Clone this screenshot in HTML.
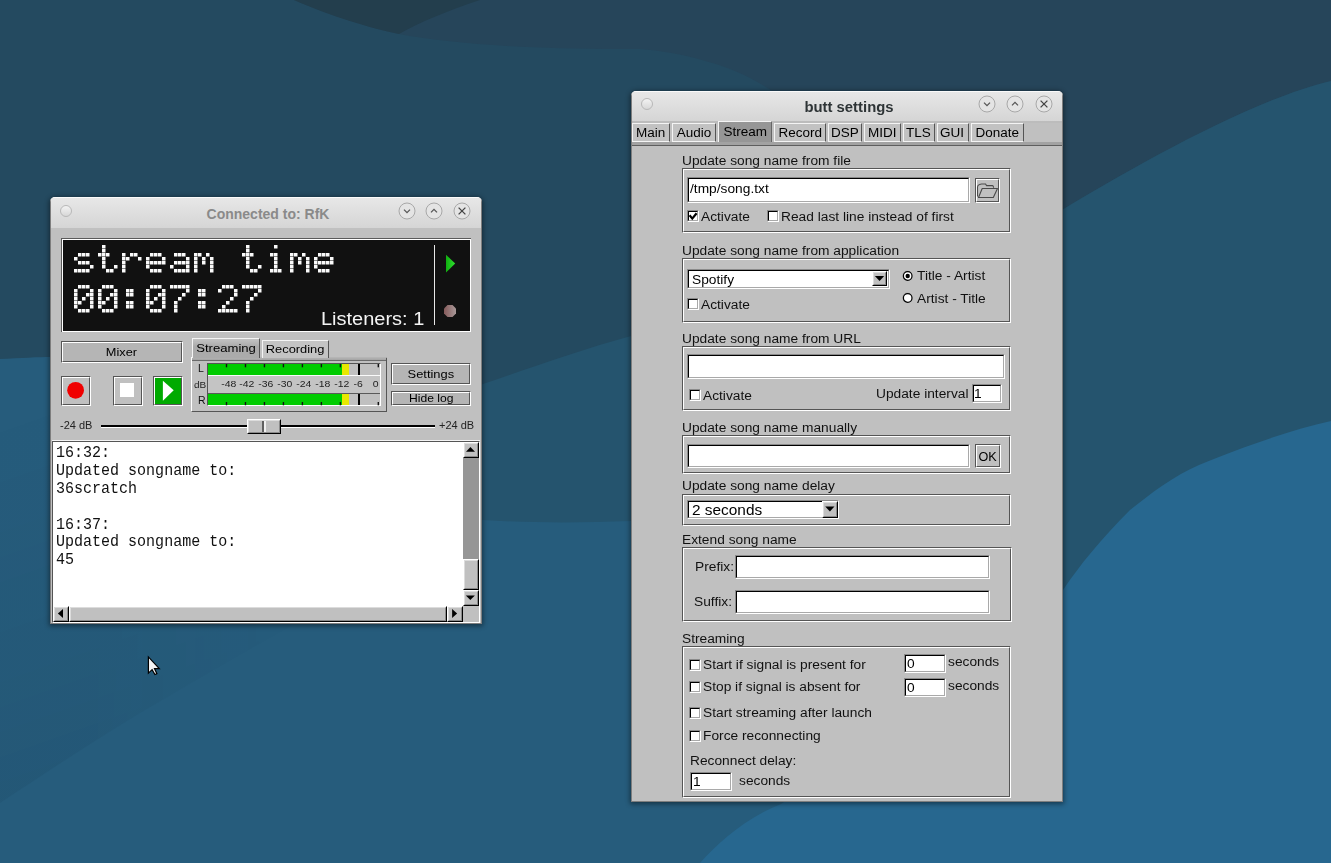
<!DOCTYPE html><html><head><meta charset="utf-8"><style>html,body{margin:0;padding:0;}body{width:1331px;height:863px;overflow:hidden;position:relative;background:#244a60;}</style></head><body>
<svg style="position:absolute;left:0;top:0" width="1331" height="863" viewBox="0 0 1331 863">
<rect width="1331" height="863" fill="#244a60"/>
<path d="M294 0 C330 15 370 28 399 34 C450 44 540 50 640 49 C680 52 730 65 759 83 C860 140 960 250 1062 210 C1130 169 1250 100 1331 81 L1331 0 Z" fill="#26455a"/>
<path d="M294 0 C330 16 370 28 399 34 C420 22 450 10 480 0 Z" fill="#233e4d"/>
<path d="M300 470 C380 420 430 400 483 384 C530 368 580 350 631 336 C760 300 960 247 1062 210 C1130 169 1250 100 1331 81 L1331 863 L300 863 Z" fill="#25546e"/>
<path d="M0 359 C20 358 40 357 50 357 C200 420 350 515 483 520 C530 523 580 523 631 521 C800 560 950 620 1062 640 L1331 700 L1331 863 L0 863 Z" fill="#265c7c"/>
<path d="M700 863 C718 843 745 818 781 804 C880 740 990 650 1063 590 C1080 565 1100 540 1130 510 C1150 494 1175 475 1199 465 C1240 448 1290 430 1331 421 L1331 863 Z" fill="#27678f"/>
<defs><linearGradient id="bgsh" gradientUnits="userSpaceOnUse" x1="0" y1="420" x2="120" y2="760"><stop offset="0" stop-color="#0a1a28" stop-opacity="0"/><stop offset="1" stop-color="#0a1a28" stop-opacity="0.06"/></linearGradient>
<linearGradient id="bgmx" gradientUnits="userSpaceOnUse" x1="0" y1="0" x2="300" y2="0"><stop offset="0" stop-color="#fff"/><stop offset="0.3" stop-color="#fff"/><stop offset="1" stop-color="#000"/></linearGradient>
<mask id="bgm"><rect x="0" y="300" width="400" height="563" fill="url(#bgmx)"/></mask></defs>
<path d="M0 359 L50 357 L360 470 L360 590 C300 620 230 660 159 702 C110 730 50 770 0 803 Z" fill="url(#bgsh)" mask="url(#bgm)"/>
</svg>
<div style="position:absolute;left:50px;top:197px;width:432px;height:427px;background:#c0c0c0;border-radius:5px 5px 0 0;box-shadow:0 1px 5px 1px rgba(0,0,0,0.45);overflow:hidden;"><div style="position:absolute;left:0;top:0;width:432px;height:31px;background:linear-gradient(#e7e7e7,#d5d5d5);border-top:1px solid #fafafa;box-sizing:border-box;"></div><div style="position:absolute;left:0;top:0;width:1px;height:427px;background:#7e7e7e"></div><div style="position:absolute;right:0;top:0;width:1px;height:427px;background:#7e7e7e"></div><div style="position:absolute;left:0;bottom:0;width:432px;height:1px;background:#7e7e7e"></div></div>
<svg style="position:absolute;left:58px;top:202.5px" width="16" height="16"><defs><linearGradient id="tg" x1="0" y1="0" x2="0" y2="1"><stop offset="0" stop-color="#f4f4f4"/><stop offset="1" stop-color="#d6d6d6"/></linearGradient></defs><circle cx="8" cy="8" r="5.5" fill="url(#tg)" stroke="#b8b8b8" stroke-width="1"/></svg>
<div style="position:absolute;left:118.0px;top:207.15px;width:300px;text-align:center;font:14px/14px 'Liberation Sans', sans-serif;font-weight:bold;color:#8a8a8a;white-space:pre;"><span style="display:inline-block;transform:scaleX(1.0);">Connected to: RfK</span></div>
<svg style="position:absolute;left:396.5px;top:201.3px" width="20" height="20"><g transform="translate(10 10)"><circle r="8" fill="#e4e4e4" stroke="#a8a8a8" stroke-width="1"/><path d="M-3 -1.4 L0 1.6 L3 -1.4" stroke="#555" stroke-width="1.3" fill="none"/></g></svg>
<svg style="position:absolute;left:424.4px;top:201.3px" width="20" height="20"><g transform="translate(10 10)"><circle r="8" fill="#e4e4e4" stroke="#a8a8a8" stroke-width="1"/><path d="M-3 1.4 L0 -1.6 L3 1.4" stroke="#555" stroke-width="1.3" fill="none"/></g></svg>
<svg style="position:absolute;left:452.3px;top:201.3px" width="20" height="20"><g transform="translate(10 10)"><circle r="8" fill="#e4e4e4" stroke="#a8a8a8" stroke-width="1"/><path d="M-3.4 -3.4 L3.4 3.4 M3.4 -3.4 L-3.4 3.4" stroke="#444" stroke-width="1.3" fill="none"/></g></svg>
<div style="position:absolute;left:61px;top:238px;width:410px;height:94px;background:#fff;border-top:1px solid #5a5a5a;border-left:1px solid #5a5a5a;box-sizing:border-box;"></div>
<div style="position:absolute;left:63px;top:240px;width:407px;height:91px;background:#111;"></div>
<svg style="position:absolute;left:0;top:0" width="500" height="340"><g fill="#fafafa"><rect x="78" y="253" width="3.5" height="3.5"/><rect x="82" y="253" width="3.5" height="3.5"/><rect x="86" y="253" width="3.5" height="3.5"/><rect x="74" y="257" width="3.5" height="3.5"/><rect x="78" y="261" width="3.5" height="3.5"/><rect x="82" y="261" width="3.5" height="3.5"/><rect x="86" y="261" width="3.5" height="3.5"/><rect x="90" y="265" width="3.5" height="3.5"/><rect x="74" y="269" width="3.5" height="3.5"/><rect x="78" y="269" width="3.5" height="3.5"/><rect x="82" y="269" width="3.5" height="3.5"/><rect x="86" y="269" width="3.5" height="3.5"/><rect x="102" y="245" width="3.5" height="3.5"/><rect x="102" y="249" width="3.5" height="3.5"/><rect x="98" y="253" width="3.5" height="3.5"/><rect x="102" y="253" width="3.5" height="3.5"/><rect x="106" y="253" width="3.5" height="3.5"/><rect x="102" y="257" width="3.5" height="3.5"/><rect x="102" y="261" width="3.5" height="3.5"/><rect x="102" y="265" width="3.5" height="3.5"/><rect x="114" y="265" width="3.5" height="3.5"/><rect x="106" y="269" width="3.5" height="3.5"/><rect x="110" y="269" width="3.5" height="3.5"/><rect x="122" y="253" width="3.5" height="3.5"/><rect x="130" y="253" width="3.5" height="3.5"/><rect x="134" y="253" width="3.5" height="3.5"/><rect x="122" y="257" width="3.5" height="3.5"/><rect x="126" y="257" width="3.5" height="3.5"/><rect x="138" y="257" width="3.5" height="3.5"/><rect x="122" y="261" width="3.5" height="3.5"/><rect x="122" y="265" width="3.5" height="3.5"/><rect x="122" y="269" width="3.5" height="3.5"/><rect x="150" y="253" width="3.5" height="3.5"/><rect x="154" y="253" width="3.5" height="3.5"/><rect x="158" y="253" width="3.5" height="3.5"/><rect x="146" y="257" width="3.5" height="3.5"/><rect x="162" y="257" width="3.5" height="3.5"/><rect x="146" y="261" width="3.5" height="3.5"/><rect x="150" y="261" width="3.5" height="3.5"/><rect x="154" y="261" width="3.5" height="3.5"/><rect x="158" y="261" width="3.5" height="3.5"/><rect x="162" y="261" width="3.5" height="3.5"/><rect x="146" y="265" width="3.5" height="3.5"/><rect x="150" y="269" width="3.5" height="3.5"/><rect x="154" y="269" width="3.5" height="3.5"/><rect x="158" y="269" width="3.5" height="3.5"/><rect x="174" y="253" width="3.5" height="3.5"/><rect x="178" y="253" width="3.5" height="3.5"/><rect x="182" y="253" width="3.5" height="3.5"/><rect x="186" y="257" width="3.5" height="3.5"/><rect x="174" y="261" width="3.5" height="3.5"/><rect x="178" y="261" width="3.5" height="3.5"/><rect x="182" y="261" width="3.5" height="3.5"/><rect x="186" y="261" width="3.5" height="3.5"/><rect x="170" y="265" width="3.5" height="3.5"/><rect x="186" y="265" width="3.5" height="3.5"/><rect x="174" y="269" width="3.5" height="3.5"/><rect x="178" y="269" width="3.5" height="3.5"/><rect x="182" y="269" width="3.5" height="3.5"/><rect x="186" y="269" width="3.5" height="3.5"/><rect x="194" y="253" width="3.5" height="3.5"/><rect x="198" y="253" width="3.5" height="3.5"/><rect x="206" y="253" width="3.5" height="3.5"/><rect x="194" y="257" width="3.5" height="3.5"/><rect x="202" y="257" width="3.5" height="3.5"/><rect x="210" y="257" width="3.5" height="3.5"/><rect x="194" y="261" width="3.5" height="3.5"/><rect x="202" y="261" width="3.5" height="3.5"/><rect x="210" y="261" width="3.5" height="3.5"/><rect x="194" y="265" width="3.5" height="3.5"/><rect x="210" y="265" width="3.5" height="3.5"/><rect x="194" y="269" width="3.5" height="3.5"/><rect x="210" y="269" width="3.5" height="3.5"/><rect x="246" y="245" width="3.5" height="3.5"/><rect x="246" y="249" width="3.5" height="3.5"/><rect x="242" y="253" width="3.5" height="3.5"/><rect x="246" y="253" width="3.5" height="3.5"/><rect x="250" y="253" width="3.5" height="3.5"/><rect x="246" y="257" width="3.5" height="3.5"/><rect x="246" y="261" width="3.5" height="3.5"/><rect x="246" y="265" width="3.5" height="3.5"/><rect x="258" y="265" width="3.5" height="3.5"/><rect x="250" y="269" width="3.5" height="3.5"/><rect x="254" y="269" width="3.5" height="3.5"/><rect x="274" y="245" width="3.5" height="3.5"/><rect x="270" y="253" width="3.5" height="3.5"/><rect x="274" y="253" width="3.5" height="3.5"/><rect x="274" y="257" width="3.5" height="3.5"/><rect x="274" y="261" width="3.5" height="3.5"/><rect x="274" y="265" width="3.5" height="3.5"/><rect x="270" y="269" width="3.5" height="3.5"/><rect x="274" y="269" width="3.5" height="3.5"/><rect x="278" y="269" width="3.5" height="3.5"/><rect x="290" y="253" width="3.5" height="3.5"/><rect x="294" y="253" width="3.5" height="3.5"/><rect x="302" y="253" width="3.5" height="3.5"/><rect x="290" y="257" width="3.5" height="3.5"/><rect x="298" y="257" width="3.5" height="3.5"/><rect x="306" y="257" width="3.5" height="3.5"/><rect x="290" y="261" width="3.5" height="3.5"/><rect x="298" y="261" width="3.5" height="3.5"/><rect x="306" y="261" width="3.5" height="3.5"/><rect x="290" y="265" width="3.5" height="3.5"/><rect x="306" y="265" width="3.5" height="3.5"/><rect x="290" y="269" width="3.5" height="3.5"/><rect x="306" y="269" width="3.5" height="3.5"/><rect x="318" y="253" width="3.5" height="3.5"/><rect x="322" y="253" width="3.5" height="3.5"/><rect x="326" y="253" width="3.5" height="3.5"/><rect x="314" y="257" width="3.5" height="3.5"/><rect x="330" y="257" width="3.5" height="3.5"/><rect x="314" y="261" width="3.5" height="3.5"/><rect x="318" y="261" width="3.5" height="3.5"/><rect x="322" y="261" width="3.5" height="3.5"/><rect x="326" y="261" width="3.5" height="3.5"/><rect x="330" y="261" width="3.5" height="3.5"/><rect x="314" y="265" width="3.5" height="3.5"/><rect x="318" y="269" width="3.5" height="3.5"/><rect x="322" y="269" width="3.5" height="3.5"/><rect x="326" y="269" width="3.5" height="3.5"/><rect x="78" y="285" width="3.5" height="3.5"/><rect x="82" y="285" width="3.5" height="3.5"/><rect x="86" y="285" width="3.5" height="3.5"/><rect x="74" y="289" width="3.5" height="3.5"/><rect x="90" y="289" width="3.5" height="3.5"/><rect x="74" y="293" width="3.5" height="3.5"/><rect x="86" y="293" width="3.5" height="3.5"/><rect x="90" y="293" width="3.5" height="3.5"/><rect x="74" y="297" width="3.5" height="3.5"/><rect x="82" y="297" width="3.5" height="3.5"/><rect x="90" y="297" width="3.5" height="3.5"/><rect x="74" y="301" width="3.5" height="3.5"/><rect x="78" y="301" width="3.5" height="3.5"/><rect x="90" y="301" width="3.5" height="3.5"/><rect x="74" y="305" width="3.5" height="3.5"/><rect x="90" y="305" width="3.5" height="3.5"/><rect x="78" y="309" width="3.5" height="3.5"/><rect x="82" y="309" width="3.5" height="3.5"/><rect x="86" y="309" width="3.5" height="3.5"/><rect x="102" y="285" width="3.5" height="3.5"/><rect x="106" y="285" width="3.5" height="3.5"/><rect x="110" y="285" width="3.5" height="3.5"/><rect x="98" y="289" width="3.5" height="3.5"/><rect x="114" y="289" width="3.5" height="3.5"/><rect x="98" y="293" width="3.5" height="3.5"/><rect x="110" y="293" width="3.5" height="3.5"/><rect x="114" y="293" width="3.5" height="3.5"/><rect x="98" y="297" width="3.5" height="3.5"/><rect x="106" y="297" width="3.5" height="3.5"/><rect x="114" y="297" width="3.5" height="3.5"/><rect x="98" y="301" width="3.5" height="3.5"/><rect x="102" y="301" width="3.5" height="3.5"/><rect x="114" y="301" width="3.5" height="3.5"/><rect x="98" y="305" width="3.5" height="3.5"/><rect x="114" y="305" width="3.5" height="3.5"/><rect x="102" y="309" width="3.5" height="3.5"/><rect x="106" y="309" width="3.5" height="3.5"/><rect x="110" y="309" width="3.5" height="3.5"/><rect x="126" y="289" width="3.5" height="3.5"/><rect x="130" y="289" width="3.5" height="3.5"/><rect x="126" y="293" width="3.5" height="3.5"/><rect x="130" y="293" width="3.5" height="3.5"/><rect x="126" y="301" width="3.5" height="3.5"/><rect x="130" y="301" width="3.5" height="3.5"/><rect x="126" y="305" width="3.5" height="3.5"/><rect x="130" y="305" width="3.5" height="3.5"/><rect x="150" y="285" width="3.5" height="3.5"/><rect x="154" y="285" width="3.5" height="3.5"/><rect x="158" y="285" width="3.5" height="3.5"/><rect x="146" y="289" width="3.5" height="3.5"/><rect x="162" y="289" width="3.5" height="3.5"/><rect x="146" y="293" width="3.5" height="3.5"/><rect x="158" y="293" width="3.5" height="3.5"/><rect x="162" y="293" width="3.5" height="3.5"/><rect x="146" y="297" width="3.5" height="3.5"/><rect x="154" y="297" width="3.5" height="3.5"/><rect x="162" y="297" width="3.5" height="3.5"/><rect x="146" y="301" width="3.5" height="3.5"/><rect x="150" y="301" width="3.5" height="3.5"/><rect x="162" y="301" width="3.5" height="3.5"/><rect x="146" y="305" width="3.5" height="3.5"/><rect x="162" y="305" width="3.5" height="3.5"/><rect x="150" y="309" width="3.5" height="3.5"/><rect x="154" y="309" width="3.5" height="3.5"/><rect x="158" y="309" width="3.5" height="3.5"/><rect x="170" y="285" width="3.5" height="3.5"/><rect x="174" y="285" width="3.5" height="3.5"/><rect x="178" y="285" width="3.5" height="3.5"/><rect x="182" y="285" width="3.5" height="3.5"/><rect x="186" y="285" width="3.5" height="3.5"/><rect x="186" y="289" width="3.5" height="3.5"/><rect x="182" y="293" width="3.5" height="3.5"/><rect x="178" y="297" width="3.5" height="3.5"/><rect x="174" y="301" width="3.5" height="3.5"/><rect x="174" y="305" width="3.5" height="3.5"/><rect x="174" y="309" width="3.5" height="3.5"/><rect x="198" y="289" width="3.5" height="3.5"/><rect x="202" y="289" width="3.5" height="3.5"/><rect x="198" y="293" width="3.5" height="3.5"/><rect x="202" y="293" width="3.5" height="3.5"/><rect x="198" y="301" width="3.5" height="3.5"/><rect x="202" y="301" width="3.5" height="3.5"/><rect x="198" y="305" width="3.5" height="3.5"/><rect x="202" y="305" width="3.5" height="3.5"/><rect x="222" y="285" width="3.5" height="3.5"/><rect x="226" y="285" width="3.5" height="3.5"/><rect x="230" y="285" width="3.5" height="3.5"/><rect x="218" y="289" width="3.5" height="3.5"/><rect x="234" y="289" width="3.5" height="3.5"/><rect x="234" y="293" width="3.5" height="3.5"/><rect x="230" y="297" width="3.5" height="3.5"/><rect x="226" y="301" width="3.5" height="3.5"/><rect x="222" y="305" width="3.5" height="3.5"/><rect x="218" y="309" width="3.5" height="3.5"/><rect x="222" y="309" width="3.5" height="3.5"/><rect x="226" y="309" width="3.5" height="3.5"/><rect x="230" y="309" width="3.5" height="3.5"/><rect x="234" y="309" width="3.5" height="3.5"/><rect x="242" y="285" width="3.5" height="3.5"/><rect x="246" y="285" width="3.5" height="3.5"/><rect x="250" y="285" width="3.5" height="3.5"/><rect x="254" y="285" width="3.5" height="3.5"/><rect x="258" y="285" width="3.5" height="3.5"/><rect x="258" y="289" width="3.5" height="3.5"/><rect x="254" y="293" width="3.5" height="3.5"/><rect x="250" y="297" width="3.5" height="3.5"/><rect x="246" y="301" width="3.5" height="3.5"/><rect x="246" y="305" width="3.5" height="3.5"/><rect x="246" y="309" width="3.5" height="3.5"/></g></svg>
<div style="position:absolute;left:434px;top:245px;width:1px;height:80px;background:#e8e8e8;"></div>
<svg style="position:absolute;left:440px;top:250px" width="20" height="70"><defs><linearGradient id="gt" x1="0" y1="0" x2="1" y2="0"><stop offset="0" stop-color="#10b010"/><stop offset="1" stop-color="#30e030"/></linearGradient><linearGradient id="bo" x1="0" y1="0" x2="1" y2="0"><stop offset="0" stop-color="#855a5a"/><stop offset="1" stop-color="#a89898"/></linearGradient></defs><path d="M6 4.7 L15.2 13.6 L6 22.4 Z" fill="url(#gt)"/><path d="M7.5 55 L12.5 55 L16 58.5 L16 63.5 L12.5 67 L7.5 67 L4 63.5 L4 58.5 Z" fill="url(#bo)"/></svg>
<div style="position:absolute;left:321px;top:309.76px;font:18px/18px 'Liberation Sans', sans-serif;color:#f4f4f4;white-space:pre;transform:scaleX(1.11);transform-origin:0 0;">Listeners: 1</div>
<div style="position:absolute;left:61px;top:341px;width:120px;height:20px;border-top:1px solid #555;border-left:1px solid #555;border-bottom:1px solid #fff;border-right:1px solid #fff;"><div style="position:absolute;left:0;top:0;width:118px;height:18px;border-top:1px solid #fff;border-left:1px solid #fff;border-bottom:1px solid #555;border-right:1px solid #555;background:#b5b5b5"></div></div>
<div style="position:absolute;left:21.799999999999997px;top:346.69px;width:200px;text-align:center;font:11px/11px 'Liberation Sans', sans-serif;color:#000;white-space:pre;"><span style="display:inline-block;transform:scaleX(1.16);">Mixer</span></div>
<div style="position:absolute;left:61px;top:376px;width:28px;height:28px;border-top:1px solid #555;border-left:1px solid #555;border-bottom:1px solid #fff;border-right:1px solid #fff;"><div style="position:absolute;left:0;top:0;width:26px;height:26px;border-top:1px solid #fff;border-left:1px solid #fff;border-bottom:1px solid #555;border-right:1px solid #555;background:#c0c0c0"></div></div>
<svg style="position:absolute;left:60px;top:375px" width="32" height="32"><circle cx="15.6" cy="15.3" r="8.4" fill="#f00000"/></svg>
<div style="position:absolute;left:113px;top:376px;width:28px;height:28px;border-top:1px solid #555;border-left:1px solid #555;border-bottom:1px solid #fff;border-right:1px solid #fff;"><div style="position:absolute;left:0;top:0;width:26px;height:26px;border-top:1px solid #fff;border-left:1px solid #fff;border-bottom:1px solid #555;border-right:1px solid #555;background:#c0c0c0"></div></div>
<div style="position:absolute;left:120px;top:383px;width:14px;height:14px;background:#fff;"></div>
<div style="position:absolute;left:153px;top:376px;width:28px;height:28px;border-top:1px solid #555;border-left:1px solid #555;border-bottom:1px solid #fff;border-right:1px solid #fff;"><div style="position:absolute;left:0;top:0;width:26px;height:26px;border-top:1px solid #fff;border-left:1px solid #fff;border-bottom:1px solid #555;border-right:1px solid #555;background:#00aa00"></div></div>
<svg style="position:absolute;left:150px;top:375px" width="32" height="32"><path d="M12.9 5.8 L23.7 15.3 L12.9 25.8 Z" fill="#fff"/></svg>
<div style="position:absolute;left:191px;top:357px;width:196px;height:55px;background:#c0c0c0;border-left:1px solid #fff;border-top:1px solid #fff;border-right:1px solid #555;border-bottom:1px solid #555;box-sizing:border-box;"></div>
<div style="position:absolute;left:192px;top:357px;width:194px;height:3px;background:linear-gradient(#b8b8b8,#a4a4a4);"></div>
<div style="position:absolute;left:192px;top:360px;width:194px;height:1px;background:#6a6a6a;"></div>
<div style="position:absolute;left:192px;top:338px;width:68px;height:20px;background:linear-gradient(#c4c4c4,#aaaaaa 40%,#ababab);border-left:1px solid #f4f4f4;border-top:1px solid #f4f4f4;border-right:1px solid #555;box-sizing:border-box;"></div>
<div style="position:absolute;left:262px;top:340px;width:67px;height:18px;background:#c4c4c4;border-left:1px solid #f4f4f4;border-top:1px solid #f4f4f4;border-right:1px solid #555;box-sizing:border-box;"></div>
<div style="position:absolute;left:125.9px;top:342.69px;width:200px;text-align:center;font:11px/11px 'Liberation Sans', sans-serif;color:#000;white-space:pre;"><span style="display:inline-block;transform:scaleX(1.19);">Streaming</span></div>
<div style="position:absolute;left:195.3px;top:343.69px;width:200px;text-align:center;font:11px/11px 'Liberation Sans', sans-serif;color:#000;white-space:pre;"><span style="display:inline-block;transform:scaleX(1.17);">Recording</span></div>
<div style="position:absolute;left:207px;top:363px;width:174px;height:43px;background:#c0c0c0;border-top:1px solid #555;border-left:1px solid #555;border-right:1px solid #fff;border-bottom:1px solid #fff;box-sizing:border-box;"></div>
<div style="position:absolute;left:208px;top:364px;width:134px;height:11px;background:#00cc00;"></div>
<div style="position:absolute;left:342px;top:364px;width:7px;height:11px;background:#e8e800;"></div>
<div style="position:absolute;left:208px;top:394px;width:134px;height:11px;background:#00cc00;"></div>
<div style="position:absolute;left:342px;top:394px;width:7px;height:11px;background:#e8e800;"></div>
<div style="position:absolute;left:208px;top:375px;width:172px;height:1px;background:#fafafa;"></div>
<div style="position:absolute;left:208px;top:376px;width:172px;height:17px;background:#c4c4c4;"></div>
<div style="position:absolute;left:208px;top:393px;width:172px;height:1px;background:#5a5a5a;"></div>
<div style="position:absolute;left:358px;top:364px;width:2px;height:11px;background:#000;"></div>
<div style="position:absolute;left:358px;top:394px;width:2px;height:11px;background:#000;"></div>
<svg style="position:absolute;left:200px;top:364px" width="190" height="42"><g fill="#111"><rect x="25.80" y="0" width="1.4" height="3.3"/><rect x="25.80" y="38" width="1.4" height="3.3"/><rect x="44.78" y="0" width="1.4" height="3.3"/><rect x="44.78" y="38" width="1.4" height="3.3"/><rect x="63.75" y="0" width="1.4" height="3.3"/><rect x="63.75" y="38" width="1.4" height="3.3"/><rect x="82.73" y="0" width="1.4" height="3.3"/><rect x="82.73" y="38" width="1.4" height="3.3"/><rect x="101.70" y="0" width="1.4" height="3.3"/><rect x="101.70" y="38" width="1.4" height="3.3"/><rect x="120.68" y="0" width="1.4" height="3.3"/><rect x="120.68" y="38" width="1.4" height="3.3"/><rect x="139.65" y="0" width="1.4" height="3.3"/><rect x="139.65" y="38" width="1.4" height="3.3"/><rect x="177.60" y="0" width="1.4" height="3.3"/><rect x="177.60" y="38" width="1.4" height="3.3"/></g></svg>
<div style="position:absolute;left:208.4px;top:378.76px;width:40px;text-align:center;font:9.5px/9.5px 'Liberation Sans', sans-serif;color:#222;white-space:pre;"><span style="display:inline-block;transform:scaleX(1.1);">-48</span></div>
<div style="position:absolute;left:227.3px;top:378.76px;width:40px;text-align:center;font:9.5px/9.5px 'Liberation Sans', sans-serif;color:#222;white-space:pre;"><span style="display:inline-block;transform:scaleX(1.1);">-42</span></div>
<div style="position:absolute;left:246.3px;top:378.76px;width:40px;text-align:center;font:9.5px/9.5px 'Liberation Sans', sans-serif;color:#222;white-space:pre;"><span style="display:inline-block;transform:scaleX(1.1);">-36</span></div>
<div style="position:absolute;left:265.2px;top:378.76px;width:40px;text-align:center;font:9.5px/9.5px 'Liberation Sans', sans-serif;color:#222;white-space:pre;"><span style="display:inline-block;transform:scaleX(1.1);">-30</span></div>
<div style="position:absolute;left:284.1px;top:378.76px;width:40px;text-align:center;font:9.5px/9.5px 'Liberation Sans', sans-serif;color:#222;white-space:pre;"><span style="display:inline-block;transform:scaleX(1.1);">-24</span></div>
<div style="position:absolute;left:303.0px;top:378.76px;width:40px;text-align:center;font:9.5px/9.5px 'Liberation Sans', sans-serif;color:#222;white-space:pre;"><span style="display:inline-block;transform:scaleX(1.1);">-18</span></div>
<div style="position:absolute;left:322.0px;top:378.76px;width:40px;text-align:center;font:9.5px/9.5px 'Liberation Sans', sans-serif;color:#222;white-space:pre;"><span style="display:inline-block;transform:scaleX(1.1);">-12</span></div>
<div style="position:absolute;left:338.3px;top:378.76px;width:40px;text-align:center;font:9.5px/9.5px 'Liberation Sans', sans-serif;color:#222;white-space:pre;"><span style="display:inline-block;transform:scaleX(1.1);">-6</span></div>
<div style="position:absolute;left:355.7px;top:378.76px;width:40px;text-align:center;font:9.5px/9.5px 'Liberation Sans', sans-serif;color:#222;white-space:pre;"><span style="display:inline-block;transform:scaleX(1.1);">0</span></div>
<div style="position:absolute;left:198px;top:363.54px;font:10px/10px 'Liberation Sans', sans-serif;color:#111;white-space:pre;transform:scaleX(1.05);transform-origin:0 0;">L</div>
<div style="position:absolute;left:194px;top:379.96px;font:9.5px/9.5px 'Liberation Sans', sans-serif;color:#222;white-space:pre;transform:scaleX(1.05);transform-origin:0 0;">dB</div>
<div style="position:absolute;left:198px;top:395.54px;font:10px/10px 'Liberation Sans', sans-serif;color:#111;white-space:pre;transform:scaleX(1.05);transform-origin:0 0;">R</div>
<div style="position:absolute;left:391px;top:363px;width:78px;height:20px;border-top:1px solid #555;border-left:1px solid #555;border-bottom:1px solid #fff;border-right:1px solid #fff;"><div style="position:absolute;left:0;top:0;width:76px;height:18px;border-top:1px solid #fff;border-left:1px solid #fff;border-bottom:1px solid #555;border-right:1px solid #555;background:#b5b5b5"></div></div>
<div style="position:absolute;left:330.4px;top:368.69px;width:200px;text-align:center;font:11px/11px 'Liberation Sans', sans-serif;color:#000;white-space:pre;"><span style="display:inline-block;transform:scaleX(1.17);">Settings</span></div>
<div style="position:absolute;left:391px;top:391px;width:78px;height:13px;border-top:1px solid #555;border-left:1px solid #555;border-bottom:1px solid #fff;border-right:1px solid #fff;"><div style="position:absolute;left:0;top:0;width:76px;height:11px;border-top:1px solid #fff;border-left:1px solid #fff;border-bottom:1px solid #555;border-right:1px solid #555;background:#b5b5b5"></div></div>
<div style="position:absolute;left:330.7px;top:393.29px;width:200px;text-align:center;font:11px/11px 'Liberation Sans', sans-serif;color:#000;white-space:pre;"><span style="display:inline-block;transform:scaleX(1.1);">Hide log</span></div>
<div style="position:absolute;left:60px;top:420.94px;font:10px/10px 'Liberation Sans', sans-serif;color:#222;white-space:pre;transform:scaleX(1.1);transform-origin:0 0;">-24 dB</div>
<div style="position:absolute;left:438.5px;top:421.14px;font:10px/10px 'Liberation Sans', sans-serif;color:#222;white-space:pre;transform:scaleX(1.1);transform-origin:0 0;">+24 dB</div>
<div style="position:absolute;left:101px;top:425px;width:334px;height:2px;background:#000;"></div>
<div style="position:absolute;left:101px;top:427px;width:334px;height:1px;background:#fff;"></div>
<div style="position:absolute;left:247px;top:419px;width:32px;height:13px;border-top:1px solid #fff;border-left:1px solid #fff;border-bottom:1px solid #000;border-right:1px solid #000;"><div style="position:absolute;left:0;top:0;width:30px;height:11px;border-top:1px solid #dcdcdc;border-left:1px solid #dcdcdc;border-bottom:1px solid #8a8a8a;border-right:1px solid #8a8a8a;background:#c0c0c0"></div></div>
<div style="position:absolute;left:262px;top:421px;width:2px;height:11px;background:#606060;"></div>
<div style="position:absolute;left:264px;top:421px;width:2px;height:11px;background:#f0f0f0;"></div>
<div style="position:absolute;left:52px;top:440px;width:428px;height:1px;background:#f4f4f4;"></div>
<div style="position:absolute;left:52px;top:441px;width:428px;height:182px;background:#fff;border-top:1px solid #555;border-left:1px solid #555;border-right:1px solid #fff;border-bottom:1px solid #fff;box-sizing:border-box;"></div>
<div style="position:absolute;left:55.5px;top:445.35px;font:16.5px/16.5px 'Liberation Mono', monospace;color:#111;white-space:pre;transform:scaleX(0.91);transform-origin:0 0;">16:32:</div>
<div style="position:absolute;left:55.5px;top:463.15px;font:16.5px/16.5px 'Liberation Mono', monospace;color:#111;white-space:pre;transform:scaleX(0.91);transform-origin:0 0;">Updated songname to:</div>
<div style="position:absolute;left:55.5px;top:480.95px;font:16.5px/16.5px 'Liberation Mono', monospace;color:#111;white-space:pre;transform:scaleX(0.91);transform-origin:0 0;">36scratch</div>
<div style="position:absolute;left:55.5px;top:516.55px;font:16.5px/16.5px 'Liberation Mono', monospace;color:#111;white-space:pre;transform:scaleX(0.91);transform-origin:0 0;">16:37:</div>
<div style="position:absolute;left:55.5px;top:534.35px;font:16.5px/16.5px 'Liberation Mono', monospace;color:#111;white-space:pre;transform:scaleX(0.91);transform-origin:0 0;">Updated songname to:</div>
<div style="position:absolute;left:55.5px;top:552.15px;font:16.5px/16.5px 'Liberation Mono', monospace;color:#111;white-space:pre;transform:scaleX(0.91);transform-origin:0 0;">45</div>
<div style="position:absolute;left:463px;top:442px;width:16px;height:164px;background:#969696;"></div>
<div style="position:absolute;left:463px;top:442px;width:14px;height:14px;border-top:1px solid #fff;border-left:1px solid #fff;border-bottom:1px solid #000;border-right:1px solid #000;"><div style="position:absolute;left:0;top:0;width:12px;height:12px;border-top:1px solid #dcdcdc;border-left:1px solid #dcdcdc;border-bottom:1px solid #8a8a8a;border-right:1px solid #8a8a8a;background:#c0c0c0"></div></div>
<svg style="position:absolute;left:463px;top:442px" width="16" height="16"><path d="M3 9.8 L12 9.8 L7.4 4.9 Z" fill="#000"/></svg>
<div style="position:absolute;left:463px;top:559px;width:14px;height:29px;border-top:1px solid #fff;border-left:1px solid #fff;border-bottom:1px solid #000;border-right:1px solid #000;"><div style="position:absolute;left:0;top:0;width:12px;height:27px;border-top:1px solid #dcdcdc;border-left:1px solid #dcdcdc;border-bottom:1px solid #8a8a8a;border-right:1px solid #8a8a8a;background:#c0c0c0"></div></div>
<div style="position:absolute;left:463px;top:590px;width:14px;height:14px;border-top:1px solid #fff;border-left:1px solid #fff;border-bottom:1px solid #000;border-right:1px solid #000;"><div style="position:absolute;left:0;top:0;width:12px;height:12px;border-top:1px solid #dcdcdc;border-left:1px solid #dcdcdc;border-bottom:1px solid #8a8a8a;border-right:1px solid #8a8a8a;background:#c0c0c0"></div></div>
<svg style="position:absolute;left:463px;top:590px" width="16" height="16"><path d="M2.8 5.4 L11.9 5.4 L7.3 9.9 Z" fill="#000"/></svg>
<div style="position:absolute;left:53px;top:606px;width:426px;height:16px;background:#c0c0c0;"></div>
<div style="position:absolute;left:53px;top:606px;width:14px;height:14px;border-top:1px solid #fff;border-left:1px solid #fff;border-bottom:1px solid #000;border-right:1px solid #000;"><div style="position:absolute;left:0;top:0;width:12px;height:12px;border-top:1px solid #dcdcdc;border-left:1px solid #dcdcdc;border-bottom:1px solid #8a8a8a;border-right:1px solid #8a8a8a;background:#c0c0c0"></div></div>
<svg style="position:absolute;left:53px;top:606px" width="16" height="16"><path d="M4.9 7.4 L10 2.9 L10 11.9 Z" fill="#000"/></svg>
<div style="position:absolute;left:69px;top:606px;width:376px;height:14px;border-top:1px solid #fff;border-left:1px solid #fff;border-bottom:1px solid #000;border-right:1px solid #000;"><div style="position:absolute;left:0;top:0;width:374px;height:12px;border-top:1px solid #dcdcdc;border-left:1px solid #dcdcdc;border-bottom:1px solid #8a8a8a;border-right:1px solid #8a8a8a;background:#c0c0c0"></div></div>
<div style="position:absolute;left:447px;top:606px;width:14px;height:14px;border-top:1px solid #fff;border-left:1px solid #fff;border-bottom:1px solid #000;border-right:1px solid #000;"><div style="position:absolute;left:0;top:0;width:12px;height:12px;border-top:1px solid #dcdcdc;border-left:1px solid #dcdcdc;border-bottom:1px solid #8a8a8a;border-right:1px solid #8a8a8a;background:#c0c0c0"></div></div>
<svg style="position:absolute;left:447px;top:606px" width="16" height="16"><path d="M5.1 2.9 L5.1 12 L10.1 7.5 Z" fill="#000"/></svg>
<div style="position:absolute;left:631px;top:91px;width:432px;height:711px;background:#c0c0c0;border-radius:5px 5px 0 0;box-shadow:0 1px 5px 1px rgba(0,0,0,0.45);overflow:hidden;"><div style="position:absolute;left:0;top:0;width:432px;height:30px;background:linear-gradient(#e7e7e7,#d5d5d5);border-top:1px solid #fafafa;box-sizing:border-box;"></div><div style="position:absolute;left:0;top:0;width:1px;height:711px;background:#7e7e7e"></div><div style="position:absolute;right:0;top:0;width:1px;height:711px;background:#7e7e7e"></div><div style="position:absolute;left:0;bottom:0;width:432px;height:1px;background:#7e7e7e"></div></div>
<svg style="position:absolute;left:639px;top:95.7px" width="16" height="16"><defs><linearGradient id="tg" x1="0" y1="0" x2="0" y2="1"><stop offset="0" stop-color="#f4f4f4"/><stop offset="1" stop-color="#d6d6d6"/></linearGradient></defs><circle cx="8" cy="8" r="5.5" fill="url(#tg)" stroke="#b8b8b8" stroke-width="1"/></svg>
<div style="position:absolute;left:699.3px;top:99.95px;width:300px;text-align:center;font:14px/14px 'Liberation Sans', sans-serif;font-weight:bold;color:#2e3436;white-space:pre;"><span style="display:inline-block;transform:scaleX(1.06);">butt settings</span></div>
<svg style="position:absolute;left:977px;top:94px" width="20" height="20"><g transform="translate(10 10)"><circle r="8" fill="#e4e4e4" stroke="#a8a8a8" stroke-width="1"/><path d="M-3 -1.4 L0 1.6 L3 -1.4" stroke="#555" stroke-width="1.3" fill="none"/></g></svg>
<svg style="position:absolute;left:1005px;top:94px" width="20" height="20"><g transform="translate(10 10)"><circle r="8" fill="#e4e4e4" stroke="#a8a8a8" stroke-width="1"/><path d="M-3 1.4 L0 -1.6 L3 1.4" stroke="#555" stroke-width="1.3" fill="none"/></g></svg>
<svg style="position:absolute;left:1033.8px;top:94px" width="20" height="20"><g transform="translate(10 10)"><circle r="8" fill="#e4e4e4" stroke="#a8a8a8" stroke-width="1"/><path d="M-3.4 -3.4 L3.4 3.4 M3.4 -3.4 L-3.4 3.4" stroke="#444" stroke-width="1.3" fill="none"/></g></svg>
<div style="position:absolute;left:632px;top:121px;width:430px;height:2px;background:#bcbcbc;"></div>
<div style="position:absolute;left:632px;top:142px;width:430px;height:3px;background:#a2a2a2;"></div>
<div style="position:absolute;left:632px;top:145px;width:430px;height:1px;background:#5e5e5e;"></div>
<div style="position:absolute;left:632px;top:123px;width:38px;height:19px;background:#c2c2c2;border-left:1px solid #f4f4f4;border-top:1px solid #f4f4f4;border-bottom:1px solid #f4f4f4;border-right:1px solid #555;box-sizing:border-box;"></div>
<div style="position:absolute;left:610.6px;top:126.92px;width:80px;text-align:center;font:12.5px/12.5px 'Liberation Sans', sans-serif;color:#000;white-space:pre;"><span style="display:inline-block;transform:scaleX(1.08);">Main</span></div>
<div style="position:absolute;left:672px;top:123px;width:44px;height:19px;background:#c2c2c2;border-left:1px solid #f4f4f4;border-top:1px solid #f4f4f4;border-bottom:1px solid #f4f4f4;border-right:1px solid #555;box-sizing:border-box;"></div>
<div style="position:absolute;left:654.0px;top:126.92px;width:80px;text-align:center;font:12.5px/12.5px 'Liberation Sans', sans-serif;color:#000;white-space:pre;"><span style="display:inline-block;transform:scaleX(1.08);">Audio</span></div>
<div style="position:absolute;left:718px;top:121px;width:54px;height:21px;background:#969696;border-left:1px solid #f4f4f4;border-top:1px solid #f4f4f4;border-right:1px solid #666;box-sizing:border-box;"></div>
<div style="position:absolute;left:704.9px;top:125.92px;width:80px;text-align:center;font:12.5px/12.5px 'Liberation Sans', sans-serif;color:#000;white-space:pre;"><span style="display:inline-block;transform:scaleX(1.08);">Stream</span></div>
<div style="position:absolute;left:774px;top:123px;width:52px;height:19px;background:#c2c2c2;border-left:1px solid #f4f4f4;border-top:1px solid #f4f4f4;border-bottom:1px solid #f4f4f4;border-right:1px solid #555;box-sizing:border-box;"></div>
<div style="position:absolute;left:759.7px;top:126.92px;width:80px;text-align:center;font:12.5px/12.5px 'Liberation Sans', sans-serif;color:#000;white-space:pre;"><span style="display:inline-block;transform:scaleX(1.08);">Record</span></div>
<div style="position:absolute;left:828px;top:123px;width:34px;height:19px;background:#c2c2c2;border-left:1px solid #f4f4f4;border-top:1px solid #f4f4f4;border-bottom:1px solid #f4f4f4;border-right:1px solid #555;box-sizing:border-box;"></div>
<div style="position:absolute;left:805.0px;top:126.92px;width:80px;text-align:center;font:12.5px/12.5px 'Liberation Sans', sans-serif;color:#000;white-space:pre;"><span style="display:inline-block;transform:scaleX(1.08);">DSP</span></div>
<div style="position:absolute;left:864px;top:123px;width:37px;height:19px;background:#c2c2c2;border-left:1px solid #f4f4f4;border-top:1px solid #f4f4f4;border-bottom:1px solid #f4f4f4;border-right:1px solid #555;box-sizing:border-box;"></div>
<div style="position:absolute;left:842.2px;top:126.92px;width:80px;text-align:center;font:12.5px/12.5px 'Liberation Sans', sans-serif;color:#000;white-space:pre;"><span style="display:inline-block;transform:scaleX(1.08);">MIDI</span></div>
<div style="position:absolute;left:903px;top:123px;width:32px;height:19px;background:#c2c2c2;border-left:1px solid #f4f4f4;border-top:1px solid #f4f4f4;border-bottom:1px solid #f4f4f4;border-right:1px solid #555;box-sizing:border-box;"></div>
<div style="position:absolute;left:878.5px;top:126.92px;width:80px;text-align:center;font:12.5px/12.5px 'Liberation Sans', sans-serif;color:#000;white-space:pre;"><span style="display:inline-block;transform:scaleX(1.08);">TLS</span></div>
<div style="position:absolute;left:937px;top:123px;width:32px;height:19px;background:#c2c2c2;border-left:1px solid #f4f4f4;border-top:1px solid #f4f4f4;border-bottom:1px solid #f4f4f4;border-right:1px solid #555;box-sizing:border-box;"></div>
<div style="position:absolute;left:912.2px;top:126.92px;width:80px;text-align:center;font:12.5px/12.5px 'Liberation Sans', sans-serif;color:#000;white-space:pre;"><span style="display:inline-block;transform:scaleX(1.08);">GUI</span></div>
<div style="position:absolute;left:971px;top:123px;width:53px;height:19px;background:#c2c2c2;border-left:1px solid #f4f4f4;border-top:1px solid #f4f4f4;border-bottom:1px solid #f4f4f4;border-right:1px solid #555;box-sizing:border-box;"></div>
<div style="position:absolute;left:957.6px;top:126.92px;width:80px;text-align:center;font:12.5px/12.5px 'Liberation Sans', sans-serif;color:#000;white-space:pre;"><span style="display:inline-block;transform:scaleX(1.08);">Donate</span></div>
<div style="position:absolute;left:682.1px;top:155.12px;font:12.5px/12.5px 'Liberation Sans', sans-serif;color:#111;white-space:pre;transform:scaleX(1.1);transform-origin:0 0;">Update song name from file</div>
<div style="position:absolute;left:682px;top:168px;width:327px;height:63px;border-top:1px solid #555;border-left:1px solid #555;border-bottom:1px solid #fff;border-right:1px solid #fff;"><div style="position:absolute;left:0;top:0;width:325px;height:61px;border-top:1px solid #fff;border-left:1px solid #fff;border-bottom:1px solid #555;border-right:1px solid #555;background:transparent"></div></div>
<div style="position:absolute;left:687px;top:177px;width:281px;height:24px;border-top:1px solid #8a8a8a;border-left:1px solid #8a8a8a;border-bottom:1px solid #fff;border-right:1px solid #fff;"><div style="position:absolute;left:0;top:0;width:279px;height:22px;border-top:1px solid #000;border-left:1px solid #000;border-bottom:1px solid #a9a9a9;border-right:1px solid #a9a9a9;background:#fff"></div></div>
<div style="position:absolute;left:690.2px;top:183.02px;font:12.5px/12.5px 'Liberation Sans', sans-serif;color:#000;white-space:pre;transform:scaleX(1.1);transform-origin:0 0;">/tmp/song.txt</div>
<div style="position:absolute;left:975px;top:178px;width:23px;height:23px;border-top:1px solid #555;border-left:1px solid #555;border-bottom:1px solid #fff;border-right:1px solid #fff;"><div style="position:absolute;left:0;top:0;width:21px;height:21px;border-top:1px solid #fff;border-left:1px solid #fff;border-bottom:1px solid #555;border-right:1px solid #555;background:#c0c0c0"></div></div>
<svg style="position:absolute;left:975px;top:178px" width="25" height="25"><path d="M2.5 18.5 L2.5 9 Q2.5 7.2 4.5 6.5 Q6 5.8 7 6 L10.5 6 L11.6 7.6 L17.5 7.6 Q18.5 7.7 18.6 9.8" fill="none" stroke="#4a4a4a" stroke-width="1.1"/><path d="M7.2 10.5 L22.5 10.5 L18.3 19.5 L3.5 19.5 Z" fill="none" stroke="#4a4a4a" stroke-width="1.1" stroke-linejoin="round"/></svg>
<div style="position:absolute;left:687px;top:210px;width:10px;height:10px;border-top:1px solid #8a8a8a;border-left:1px solid #8a8a8a;border-bottom:1px solid #fff;border-right:1px solid #fff;"><div style="position:absolute;left:0;top:0;width:8px;height:8px;border-top:1px solid #000;border-left:1px solid #000;border-bottom:1px solid #a9a9a9;border-right:1px solid #a9a9a9;background:#fff"></div></div>
<svg style="position:absolute;left:687px;top:210px" width="12" height="12"><path d="M2.6 5.2 L5.3 8.6 L9.6 3.2" stroke="#000" stroke-width="2.2" fill="none"/></svg>
<div style="position:absolute;left:701.1px;top:211.22px;font:12.5px/12.5px 'Liberation Sans', sans-serif;color:#111;white-space:pre;transform:scaleX(1.1);transform-origin:0 0;">Activate</div>
<div style="position:absolute;left:767px;top:210px;width:10px;height:10px;border-top:1px solid #8a8a8a;border-left:1px solid #8a8a8a;border-bottom:1px solid #fff;border-right:1px solid #fff;"><div style="position:absolute;left:0;top:0;width:8px;height:8px;border-top:1px solid #000;border-left:1px solid #000;border-bottom:1px solid #a9a9a9;border-right:1px solid #a9a9a9;background:#fff"></div></div>
<div style="position:absolute;left:781.3px;top:211.22px;font:12.5px/12.5px 'Liberation Sans', sans-serif;color:#111;white-space:pre;transform:scaleX(1.1);transform-origin:0 0;">Read last line instead of first</div>
<div style="position:absolute;left:682.1px;top:244.92px;font:12.5px/12.5px 'Liberation Sans', sans-serif;color:#111;white-space:pre;transform:scaleX(1.1);transform-origin:0 0;">Update song name from application</div>
<div style="position:absolute;left:682px;top:258px;width:327px;height:63px;border-top:1px solid #555;border-left:1px solid #555;border-bottom:1px solid #fff;border-right:1px solid #fff;"><div style="position:absolute;left:0;top:0;width:325px;height:61px;border-top:1px solid #fff;border-left:1px solid #fff;border-bottom:1px solid #555;border-right:1px solid #555;background:transparent"></div></div>
<div style="position:absolute;left:687px;top:269px;width:201px;height:18px;border-top:1px solid #8a8a8a;border-left:1px solid #8a8a8a;border-bottom:1px solid #fff;border-right:1px solid #fff;"><div style="position:absolute;left:0;top:0;width:199px;height:16px;border-top:1px solid #000;border-left:1px solid #000;border-bottom:1px solid #a9a9a9;border-right:1px solid #a9a9a9;background:#fff"></div></div>
<div style="position:absolute;left:692px;top:273.62px;font:12.5px/12.5px 'Liberation Sans', sans-serif;color:#000;white-space:pre;transform:scaleX(1.1);transform-origin:0 0;">Spotify</div>
<div style="position:absolute;left:872px;top:271px;width:13px;height:13px;border-top:1px solid #fff;border-left:1px solid #fff;border-bottom:1px solid #000;border-right:1px solid #000;"><div style="position:absolute;left:0;top:0;width:11px;height:11px;border-top:1px solid #dcdcdc;border-left:1px solid #dcdcdc;border-bottom:1px solid #8a8a8a;border-right:1px solid #8a8a8a;background:#c0c0c0"></div></div>
<svg style="position:absolute;left:872px;top:271px" width="15" height="15"><path d="M2.9 5 L12.2 5 L7.6 9.9 Z" fill="#000"/></svg>
<div style="position:absolute;left:687px;top:298px;width:10px;height:10px;border-top:1px solid #8a8a8a;border-left:1px solid #8a8a8a;border-bottom:1px solid #fff;border-right:1px solid #fff;"><div style="position:absolute;left:0;top:0;width:8px;height:8px;border-top:1px solid #000;border-left:1px solid #000;border-bottom:1px solid #a9a9a9;border-right:1px solid #a9a9a9;background:#fff"></div></div>
<div style="position:absolute;left:701.1px;top:299.32px;font:12.5px/12.5px 'Liberation Sans', sans-serif;color:#111;white-space:pre;transform:scaleX(1.1);transform-origin:0 0;">Activate</div>
<svg style="position:absolute;left:900px;top:267.9px" width="16" height="16"><circle cx="7.2" cy="7.6" r="5" fill="#8a8a8a" opacity="0.35"/><circle cx="7.7" cy="8" r="4.3" fill="#fff" stroke="#000" stroke-width="1.2"/><circle cx="7.7" cy="8" r="2.2" fill="#000"/></svg>
<svg style="position:absolute;left:900px;top:289.6px" width="16" height="16"><circle cx="7.2" cy="7.6" r="5" fill="#8a8a8a" opacity="0.35"/><circle cx="7.7" cy="8" r="4.3" fill="#fff" stroke="#000" stroke-width="1.2"/></svg>
<div style="position:absolute;left:916.7px;top:270.42px;font:12.5px/12.5px 'Liberation Sans', sans-serif;color:#111;white-space:pre;transform:scaleX(1.1);transform-origin:0 0;">Title - Artist</div>
<div style="position:absolute;left:916.7px;top:293.02px;font:12.5px/12.5px 'Liberation Sans', sans-serif;color:#111;white-space:pre;transform:scaleX(1.1);transform-origin:0 0;">Artist - Title</div>
<div style="position:absolute;left:682.1px;top:332.92px;font:12.5px/12.5px 'Liberation Sans', sans-serif;color:#111;white-space:pre;transform:scaleX(1.1);transform-origin:0 0;">Update song name from URL</div>
<div style="position:absolute;left:682px;top:346px;width:327px;height:63px;border-top:1px solid #555;border-left:1px solid #555;border-bottom:1px solid #fff;border-right:1px solid #fff;"><div style="position:absolute;left:0;top:0;width:325px;height:61px;border-top:1px solid #fff;border-left:1px solid #fff;border-bottom:1px solid #555;border-right:1px solid #555;background:transparent"></div></div>
<div style="position:absolute;left:687px;top:354px;width:316px;height:23px;border-top:1px solid #8a8a8a;border-left:1px solid #8a8a8a;border-bottom:1px solid #fff;border-right:1px solid #fff;"><div style="position:absolute;left:0;top:0;width:314px;height:21px;border-top:1px solid #000;border-left:1px solid #000;border-bottom:1px solid #a9a9a9;border-right:1px solid #a9a9a9;background:#fff"></div></div>
<div style="position:absolute;left:689px;top:389px;width:10px;height:10px;border-top:1px solid #8a8a8a;border-left:1px solid #8a8a8a;border-bottom:1px solid #fff;border-right:1px solid #fff;"><div style="position:absolute;left:0;top:0;width:8px;height:8px;border-top:1px solid #000;border-left:1px solid #000;border-bottom:1px solid #a9a9a9;border-right:1px solid #a9a9a9;background:#fff"></div></div>
<div style="position:absolute;left:702.9px;top:389.92px;font:12.5px/12.5px 'Liberation Sans', sans-serif;color:#111;white-space:pre;transform:scaleX(1.1);transform-origin:0 0;">Activate</div>
<div style="position:absolute;left:875.9px;top:388.12px;font:12.5px/12.5px 'Liberation Sans', sans-serif;color:#111;white-space:pre;transform:scaleX(1.1);transform-origin:0 0;">Update interval</div>
<div style="position:absolute;left:972px;top:384px;width:28px;height:17px;border-top:1px solid #8a8a8a;border-left:1px solid #8a8a8a;border-bottom:1px solid #fff;border-right:1px solid #fff;"><div style="position:absolute;left:0;top:0;width:26px;height:15px;border-top:1px solid #000;border-left:1px solid #000;border-bottom:1px solid #a9a9a9;border-right:1px solid #a9a9a9;background:#fff"></div></div>
<div style="position:absolute;left:974px;top:388.22px;font:12.5px/12.5px 'Liberation Sans', sans-serif;color:#000;white-space:pre;transform:scaleX(1.1);transform-origin:0 0;">1</div>
<div style="position:absolute;left:682.1px;top:421.72px;font:12.5px/12.5px 'Liberation Sans', sans-serif;color:#111;white-space:pre;transform:scaleX(1.1);transform-origin:0 0;">Update song name manually</div>
<div style="position:absolute;left:682px;top:435px;width:327px;height:37px;border-top:1px solid #555;border-left:1px solid #555;border-bottom:1px solid #fff;border-right:1px solid #fff;"><div style="position:absolute;left:0;top:0;width:325px;height:35px;border-top:1px solid #fff;border-left:1px solid #fff;border-bottom:1px solid #555;border-right:1px solid #555;background:transparent"></div></div>
<div style="position:absolute;left:687px;top:444px;width:281px;height:22px;border-top:1px solid #8a8a8a;border-left:1px solid #8a8a8a;border-bottom:1px solid #fff;border-right:1px solid #fff;"><div style="position:absolute;left:0;top:0;width:279px;height:20px;border-top:1px solid #000;border-left:1px solid #000;border-bottom:1px solid #a9a9a9;border-right:1px solid #a9a9a9;background:#fff"></div></div>
<div style="position:absolute;left:975px;top:444px;width:24px;height:22px;border-top:1px solid #555;border-left:1px solid #555;border-bottom:1px solid #fff;border-right:1px solid #fff;"><div style="position:absolute;left:0;top:0;width:22px;height:20px;border-top:1px solid #fff;border-left:1px solid #fff;border-bottom:1px solid #555;border-right:1px solid #555;background:#c0c0c0"></div></div>
<div style="position:absolute;left:968.0px;top:451.04px;width:40px;text-align:center;font:12px/12px 'Liberation Sans', sans-serif;color:#000;white-space:pre;"><span style="display:inline-block;transform:scaleX(1.05);">OK</span></div>
<div style="position:absolute;left:682.1px;top:480.42px;font:12.5px/12.5px 'Liberation Sans', sans-serif;color:#111;white-space:pre;transform:scaleX(1.1);transform-origin:0 0;">Update song name delay</div>
<div style="position:absolute;left:682px;top:494px;width:327px;height:30px;border-top:1px solid #555;border-left:1px solid #555;border-bottom:1px solid #fff;border-right:1px solid #fff;"><div style="position:absolute;left:0;top:0;width:325px;height:28px;border-top:1px solid #fff;border-left:1px solid #fff;border-bottom:1px solid #555;border-right:1px solid #555;background:transparent"></div></div>
<div style="position:absolute;left:687px;top:500px;width:150px;height:17px;border-top:1px solid #8a8a8a;border-left:1px solid #8a8a8a;border-bottom:1px solid #fff;border-right:1px solid #fff;"><div style="position:absolute;left:0;top:0;width:148px;height:15px;border-top:1px solid #000;border-left:1px solid #000;border-bottom:1px solid #a9a9a9;border-right:1px solid #a9a9a9;background:#fff"></div></div>
<div style="position:absolute;left:691.5px;top:502.55px;font:14px/14px 'Liberation Sans', sans-serif;color:#000;white-space:pre;transform:scaleX(1.1);transform-origin:0 0;">2 seconds</div>
<div style="position:absolute;left:822px;top:501px;width:14px;height:15px;border-top:1px solid #fff;border-left:1px solid #fff;border-bottom:1px solid #000;border-right:1px solid #000;"><div style="position:absolute;left:0;top:0;width:12px;height:13px;border-top:1px solid #dcdcdc;border-left:1px solid #dcdcdc;border-bottom:1px solid #8a8a8a;border-right:1px solid #8a8a8a;background:#c0c0c0"></div></div>
<svg style="position:absolute;left:822px;top:501px" width="16" height="17"><path d="M3.2 5.5 L12.5 5.5 L7.9 10.4 Z" fill="#000"/></svg>
<div style="position:absolute;left:682.1px;top:534.12px;font:12.5px/12.5px 'Liberation Sans', sans-serif;color:#111;white-space:pre;transform:scaleX(1.1);transform-origin:0 0;">Extend song name</div>
<div style="position:absolute;left:682px;top:547px;width:328px;height:73px;border-top:1px solid #555;border-left:1px solid #555;border-bottom:1px solid #fff;border-right:1px solid #fff;"><div style="position:absolute;left:0;top:0;width:326px;height:71px;border-top:1px solid #fff;border-left:1px solid #fff;border-bottom:1px solid #555;border-right:1px solid #555;background:transparent"></div></div>
<div style="position:absolute;left:735px;top:555px;width:253px;height:22px;border-top:1px solid #8a8a8a;border-left:1px solid #8a8a8a;border-bottom:1px solid #fff;border-right:1px solid #fff;"><div style="position:absolute;left:0;top:0;width:251px;height:20px;border-top:1px solid #000;border-left:1px solid #000;border-bottom:1px solid #a9a9a9;border-right:1px solid #a9a9a9;background:#fff"></div></div>
<div style="position:absolute;left:695.0px;top:561.22px;font:12.5px/12.5px 'Liberation Sans', sans-serif;color:#111;white-space:pre;transform:scaleX(1.1);transform-origin:0 0;">Prefix:</div>
<div style="position:absolute;left:735px;top:590px;width:253px;height:22px;border-top:1px solid #8a8a8a;border-left:1px solid #8a8a8a;border-bottom:1px solid #fff;border-right:1px solid #fff;"><div style="position:absolute;left:0;top:0;width:251px;height:20px;border-top:1px solid #000;border-left:1px solid #000;border-bottom:1px solid #a9a9a9;border-right:1px solid #a9a9a9;background:#fff"></div></div>
<div style="position:absolute;left:694.0px;top:595.92px;font:12.5px/12.5px 'Liberation Sans', sans-serif;color:#111;white-space:pre;transform:scaleX(1.1);transform-origin:0 0;">Suffix:</div>
<div style="position:absolute;left:682.1px;top:633.42px;font:12.5px/12.5px 'Liberation Sans', sans-serif;color:#111;white-space:pre;transform:scaleX(1.1);transform-origin:0 0;">Streaming</div>
<div style="position:absolute;left:682px;top:646px;width:327px;height:150px;border-top:1px solid #555;border-left:1px solid #555;border-bottom:1px solid #fff;border-right:1px solid #fff;"><div style="position:absolute;left:0;top:0;width:325px;height:148px;border-top:1px solid #fff;border-left:1px solid #fff;border-bottom:1px solid #555;border-right:1px solid #555;background:transparent"></div></div>
<div style="position:absolute;left:689px;top:659px;width:10px;height:10px;border-top:1px solid #8a8a8a;border-left:1px solid #8a8a8a;border-bottom:1px solid #fff;border-right:1px solid #fff;"><div style="position:absolute;left:0;top:0;width:8px;height:8px;border-top:1px solid #000;border-left:1px solid #000;border-bottom:1px solid #a9a9a9;border-right:1px solid #a9a9a9;background:#fff"></div></div>
<div style="position:absolute;left:703.2px;top:659.02px;font:12.5px/12.5px 'Liberation Sans', sans-serif;color:#111;white-space:pre;transform:scaleX(1.1);transform-origin:0 0;">Start if signal is present for</div>
<div style="position:absolute;left:904px;top:654px;width:40px;height:17px;border-top:1px solid #8a8a8a;border-left:1px solid #8a8a8a;border-bottom:1px solid #fff;border-right:1px solid #fff;"><div style="position:absolute;left:0;top:0;width:38px;height:15px;border-top:1px solid #000;border-left:1px solid #000;border-bottom:1px solid #a9a9a9;border-right:1px solid #a9a9a9;background:#fff"></div></div>
<div style="position:absolute;left:906.5px;top:658.42px;font:12.5px/12.5px 'Liberation Sans', sans-serif;color:#000;white-space:pre;transform:scaleX(1.1);transform-origin:0 0;">0</div>
<div style="position:absolute;left:948.1px;top:656.02px;font:12.5px/12.5px 'Liberation Sans', sans-serif;color:#111;white-space:pre;transform:scaleX(1.1);transform-origin:0 0;">seconds</div>
<div style="position:absolute;left:689px;top:681px;width:10px;height:10px;border-top:1px solid #8a8a8a;border-left:1px solid #8a8a8a;border-bottom:1px solid #fff;border-right:1px solid #fff;"><div style="position:absolute;left:0;top:0;width:8px;height:8px;border-top:1px solid #000;border-left:1px solid #000;border-bottom:1px solid #a9a9a9;border-right:1px solid #a9a9a9;background:#fff"></div></div>
<div style="position:absolute;left:703.2px;top:681.42px;font:12.5px/12.5px 'Liberation Sans', sans-serif;color:#111;white-space:pre;transform:scaleX(1.1);transform-origin:0 0;">Stop if signal is absent for</div>
<div style="position:absolute;left:904px;top:678px;width:40px;height:17px;border-top:1px solid #8a8a8a;border-left:1px solid #8a8a8a;border-bottom:1px solid #fff;border-right:1px solid #fff;"><div style="position:absolute;left:0;top:0;width:38px;height:15px;border-top:1px solid #000;border-left:1px solid #000;border-bottom:1px solid #a9a9a9;border-right:1px solid #a9a9a9;background:#fff"></div></div>
<div style="position:absolute;left:906.5px;top:682.42px;font:12.5px/12.5px 'Liberation Sans', sans-serif;color:#000;white-space:pre;transform:scaleX(1.1);transform-origin:0 0;">0</div>
<div style="position:absolute;left:948.1px;top:680.02px;font:12.5px/12.5px 'Liberation Sans', sans-serif;color:#111;white-space:pre;transform:scaleX(1.1);transform-origin:0 0;">seconds</div>
<div style="position:absolute;left:689px;top:707px;width:10px;height:10px;border-top:1px solid #8a8a8a;border-left:1px solid #8a8a8a;border-bottom:1px solid #fff;border-right:1px solid #fff;"><div style="position:absolute;left:0;top:0;width:8px;height:8px;border-top:1px solid #000;border-left:1px solid #000;border-bottom:1px solid #a9a9a9;border-right:1px solid #a9a9a9;background:#fff"></div></div>
<div style="position:absolute;left:703.2px;top:707.12px;font:12.5px/12.5px 'Liberation Sans', sans-serif;color:#111;white-space:pre;transform:scaleX(1.1);transform-origin:0 0;">Start streaming after launch</div>
<div style="position:absolute;left:689px;top:730px;width:10px;height:10px;border-top:1px solid #8a8a8a;border-left:1px solid #8a8a8a;border-bottom:1px solid #fff;border-right:1px solid #fff;"><div style="position:absolute;left:0;top:0;width:8px;height:8px;border-top:1px solid #000;border-left:1px solid #000;border-bottom:1px solid #a9a9a9;border-right:1px solid #a9a9a9;background:#fff"></div></div>
<div style="position:absolute;left:703.2px;top:730.22px;font:12.5px/12.5px 'Liberation Sans', sans-serif;color:#111;white-space:pre;transform:scaleX(1.1);transform-origin:0 0;">Force reconnecting</div>
<div style="position:absolute;left:689.9px;top:755.12px;font:12.5px/12.5px 'Liberation Sans', sans-serif;color:#111;white-space:pre;transform:scaleX(1.1);transform-origin:0 0;">Reconnect delay:</div>
<div style="position:absolute;left:690px;top:772px;width:40px;height:17px;border-top:1px solid #8a8a8a;border-left:1px solid #8a8a8a;border-bottom:1px solid #fff;border-right:1px solid #fff;"><div style="position:absolute;left:0;top:0;width:38px;height:15px;border-top:1px solid #000;border-left:1px solid #000;border-bottom:1px solid #a9a9a9;border-right:1px solid #a9a9a9;background:#fff"></div></div>
<div style="position:absolute;left:692.5px;top:776.42px;font:12.5px/12.5px 'Liberation Sans', sans-serif;color:#000;white-space:pre;transform:scaleX(1.1);transform-origin:0 0;">1</div>
<div style="position:absolute;left:739.2px;top:775.32px;font:12.5px/12.5px 'Liberation Sans', sans-serif;color:#111;white-space:pre;transform:scaleX(1.1);transform-origin:0 0;">seconds</div>
<svg style="position:absolute;left:146px;top:654px" width="20" height="26"><path d="M2.4 2.9 L2.4 19.2 L6.1 15.6 L8.9 20.6 L10.9 19.7 L8.5 14.6 L13.3 14.6 Z" fill="#f4f4f4" stroke="#000" stroke-width="1.2" stroke-linejoin="miter"/></svg>
</body></html>
